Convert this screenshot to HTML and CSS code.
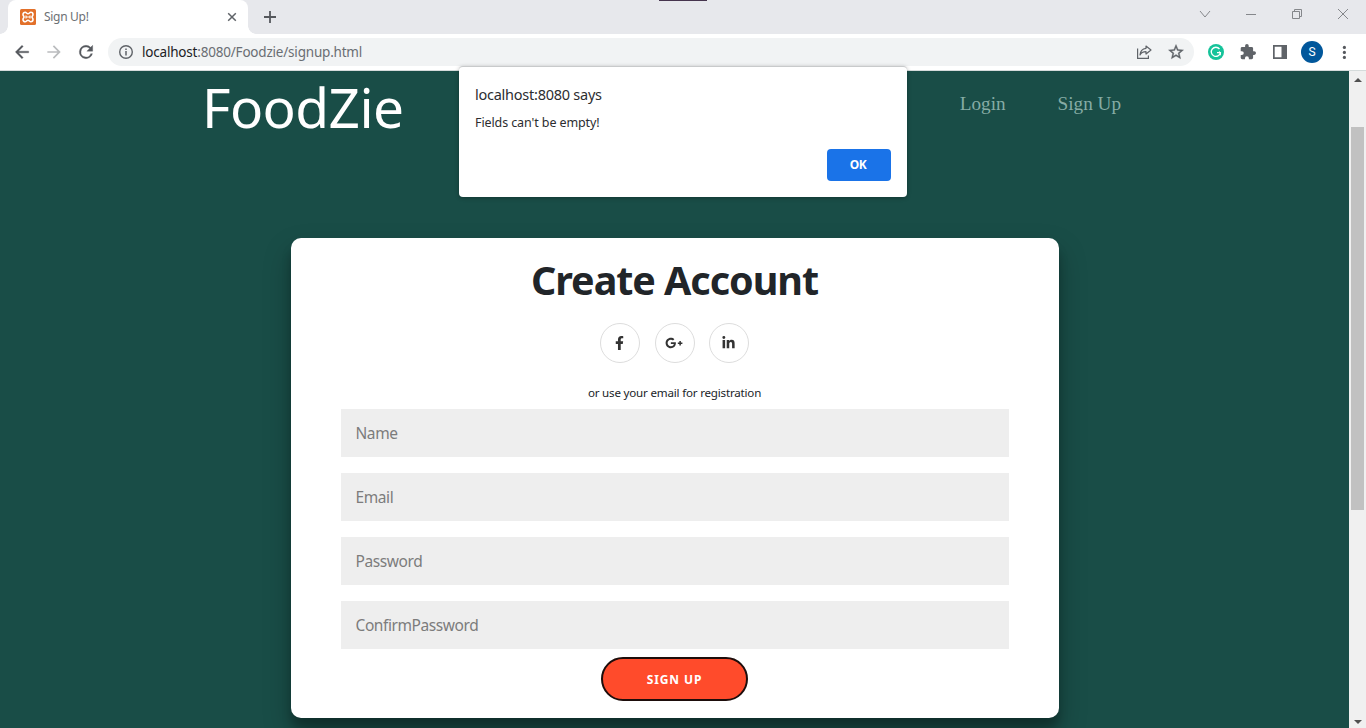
FILE: index.html
```html
<!DOCTYPE html>
<html lang="en">
<head>
<meta charset="utf-8">
<title>Sign Up!</title>
<link rel="stylesheet" href="styles.css">
</head>
<body>
<div class="window">
  <header class="tabstrip">
    <div class="tab">
      <svg class="favicon" width="16" height="16" viewBox="0 0 16 16"><rect width="16" height="16" rx="1.500" fill="#e2702a"/><path d="M5.200 3.200C6.400 3.200 6.700 4.800 8 4.800S9.600 3.200 10.800 3.200A2.200 2.200 0 0 1 13 5.400C13 6.800 12 7 12 8s1 1.200 1 2.600a2.200 2.200 0 0 1-2.200 2.200c-1.200 0-1.500-1.600-2.800-1.600s-1.600 1.600-2.800 1.600A2.200 2.200 0 0 1 3 10.600C3 9.200 4 9 4 8S3 6.800 3 5.400a2.200 2.200 0 0 1 2.200-2.200z" fill="none" stroke="#fff" stroke-width="1.600"/><path d="M6 8h4M6 6.400v3.200M10 6.400v3.200" stroke="#fff" stroke-width="1.200"/></svg>
      <span class="tab-title">Sign Up!</span>
      <svg class="tab-close" width="10" height="10" viewBox="0 0 10 10"><path d="M1.200 1.200l7.600 7.600M8.800 1.200L1.200 8.800" stroke="#5f6368" stroke-width="1.500"/></svg>
    </div>
    <svg class="new-tab" width="12" height="12" viewBox="0 0 12 12"><path d="M6 0v12M0 6h12" stroke="#55585d" stroke-width="1.800"/></svg>
    <div class="snap-bar"></div>
    <div class="window-controls">
      <svg width="12" height="12" viewBox="0 0 12 12"><path d="M1 3l5 6 5-6"/></svg>
      <svg width="12" height="12" viewBox="0 0 12 12"><path d="M1 6.500h10"/></svg>
      <svg width="12" height="12" viewBox="0 0 12 12"><path d="M1.500 3.500h7v7h-7zM3.500 3.500v-2h7v7h-2"/></svg>
      <svg width="12" height="12" viewBox="0 0 12 12"><path d="M1 1l10 10M11 1L1 11"/></svg>
    </div>
  </header>

  <div class="toolbar">
    <div class="nav-icons">
      <svg width="20" height="20" viewBox="0 0 24 24"><path fill="#55585d" stroke="#55585d" stroke-width=".4" d="M20 11H7.830l5.590-5.590L12 4l-8 8 8 8 1.410-1.410L7.830 13H20z"/></svg>
      <svg width="20" height="20" viewBox="0 0 24 24"><path fill="#babcbe" d="M4 13h12.170l-5.590 5.590L12 20l8-8-8-8-1.410 1.410L16.170 11H4z"/></svg>
      <svg width="20" height="20" viewBox="0 0 24 24"><path fill="#55585d" stroke="#55585d" stroke-width=".4" d="M17.650 6.350A7.960 7.960 0 0 0 12 4a8 8 0 1 0 7.730 10h-2.080A6 6 0 1 1 12 6c1.660 0 3.140.69 4.220 1.780L13 11h7V4z"/></svg>
    </div>
    <div class="omnibox">
      <svg class="info" width="16" height="16" viewBox="0 0 16 16"><circle cx="8" cy="8" r="6.300" fill="none" stroke="#5f6368" stroke-width="1.400"/><path d="M8 7v4.400M8 4.400v1.500" stroke="#5f6368" stroke-width="1.500"/></svg>
      <span class="url"><b>localhost</b>:8080/Foodzie/signup.html</span>
      <svg class="share" width="16" height="16" viewBox="0 0 16 16" fill="none" stroke="#5f6368" stroke-width="1.200"><path d="M1.600 4.500v9.900h10.800v-2.800"/><path d="M10 2l5 4-5 4V7.700C7 7.700 5 8.800 4 11c.3-4 2.500-6.300 6-6.700z" stroke-linejoin="round"/></svg>
      <svg class="star" width="18" height="18" viewBox="0 0 24 24"><path fill="#5f6368" stroke="#5f6368" stroke-width=".5" d="M22 9.240l-7.190-.62L12 2 9.190 8.630 2 9.240l5.460 4.730L5.820 21 12 17.270 18.180 21l-1.630-7.030zM12 15.400l-3.760 2.270 1-4.280-3.320-2.880 4.380-.38L12 6.100l1.710 4.040 4.380.38-3.320 2.880 1 4.280z"/></svg>
    </div>
    <div class="extensions">
      <svg width="16" height="16" viewBox="0 0 16 16"><circle cx="8" cy="8" r="8" fill="#15c39a"/><path d="M11.500 5A4.600 4.600 0 1 0 12.400 8.700H9" fill="none" stroke="#fff" stroke-width="1.300"/><path d="M10.900 7.300l1.500 1.400v2.600" fill="none" stroke="#fff"/></svg>
      <svg width="16" height="16" viewBox="1 1 22 22"><path fill="#5f6368" d="M20.500 11H19V7a2 2 0 0 0-2-2h-4V3.500a2.500 2.500 0 0 0-5 0V5H4a2 2 0 0 0-2 2v3.800h1.500a2.700 2.700 0 0 1 0 5.400H2V20a2 2 0 0 0 2 2h3.800v-1.500a2.700 2.700 0 0 1 5.400 0V22H17a2 2 0 0 0 2-2v-4h1.500a2.500 2.500 0 0 0 0-5z"/></svg>
      <svg width="16" height="16" viewBox="0 0 16 16"><path fill="none" stroke="#5f6368" stroke-width="1.700" d="M1.850 1.850h12.300v12.300H1.850z"/><path fill="#5f6368" d="M9.500 1H15v14H9.500z"/></svg>
      <span class="avatar">S</span>
      <svg width="16" height="16" viewBox="0 0 16 16" fill="#55585d"><circle cx="8.400" cy="3.400" r="1.600"/><circle cx="8.400" cy="8.400" r="1.600"/><circle cx="8.400" cy="13.400" r="1.600"/></svg>
    </div>
  </div>

  <div class="viewport">
    <main class="page">
      <nav class="navbar">
        <span class="brand">FoodZie</span>
        <div class="links"><span>Login</span><span>Sign Up</span></div>
      </nav>
      <form class="card">
        <h1>Create Account</h1>
        <div class="socials">
          <span class="social"><svg width="9" height="14" viewBox="0 0 320 512"><path fill="#333" d="M279.140 288l14.220-92.660h-88.910v-60.130c0-25.350 12.420-50.060 52.240-50.060h40.420V6.260S260.430 0 225.360 0c-73.220 0-121.080 44.380-121.080 124.720v70.620H22.890V288h81.390v224h100.170V288z"/></svg></span>
          <span class="social"><svg width="18" height="14" viewBox="0 0 640 512"><path fill="#333" d="M386.061 228.496c1.834 9.692 3.143 19.384 3.143 31.956C389.204 370.205 315.599 448 204.800 448c-106.084 0-192-85.915-192-192s85.916-192 192-192c51.864 0 95.083 18.859 128.611 50.292l-52.126 50.030c-14.145-13.621-39.028-29.599-76.485-29.599-65.484 0-118.920 54.221-118.920 121.277 0 67.056 53.436 121.277 118.920 121.277 75.961 0 104.513-54.745 108.965-82.773H204.800v-66.009h181.261zm185.406 6.437V179.200h-56.001v55.733h-55.733v56.001h55.733v55.733h56.001v-55.733H627.200v-56.001h-55.733z"/></svg></span>
          <span class="social"><svg width="13" height="14" viewBox="0 0 448 512"><path fill="#333" d="M100.280 448H7.400V148.900h92.880zM53.790 108.100C24.090 108.100 0 83.500 0 53.800a53.790 53.790 0 0 1 107.580 0c0 29.700-24.100 54.300-53.790 54.300zM447.900 448h-92.680V302.400c0-34.700-.7-79.200-48.290-79.200-48.290 0-55.690 37.700-55.690 76.700V448h-92.780V148.900h89.080v40.800h1.300c12.400-23.500 42.690-48.300 87.880-48.300 94 0 111.280 61.900 111.280 142.300V448z"/></svg></span>
        </div>
        <span class="hint">or use your email for registration</span>
        <div class="fields">
          <input class="f-name" type="text" placeholder="Name">
          <input class="f-email" type="text" placeholder="Email">
          <input class="f-pass" type="password" placeholder="Password">
          <input class="f-confirm" type="password" placeholder="ConfirmPassword">
        </div>
        <button class="submit" type="button">SIGN UP</button>
      </form>
    </main>
    <div class="scrollbar">
      <span class="arrow up"></span>
      <span class="thumb"></span>
      <span class="arrow down"></span>
    </div>
  </div>

  <div class="dialog">
    <div class="dialog-title">localhost:8080 says</div>
    <div class="dialog-text">Fields can't be empty!</div>
    <button class="ok" type="button">OK</button>
  </div>
</div>
</body>
</html>
```
FILE: styles.css
```css
* { box-sizing: border-box; }
body { margin: 0; overflow: hidden; font-family: "Noto Sans", "Open Sans", sans-serif; }
svg { display: block; flex: none; }
button, input { font-family: inherit; }

.window { position: relative; width: 1366px; height: 728px; display: flex; flex-direction: column; background: #fff; }

.tabstrip { height: 34px; flex: none; display: flex; background: #e7e8ec; padding-left: 8px; }
.tab { position: relative; width: 240px; display: flex; align-items: center; padding: 0 11px 0 12px; background: #fff; border-radius: 8px 8px 0 0; }
.tab::before, .tab::after { content: ""; position: absolute; bottom: 0; width: 8px; height: 8px; }
.tab::before { left: -8px; background: radial-gradient(circle at 0 0, transparent 7.500px, #fff 8px); }
.tab::after { right: -8px; background: radial-gradient(circle at 100% 0, transparent 7.500px, #fff 8px); }
.tab-title { flex: 1; margin-left: 8px; font-size: 12px; line-height: 16px; color: #6c7074; letter-spacing: -0.3px; }
.new-tab { margin: 11px 0 0 16px; }
.snap-bar { width: 48px; height: 1px; margin-left: 383px; background: #46344e; }
.window-controls { flex: 1; display: flex; justify-content: flex-end; gap: 34px; padding: 8px 17px 0 0; }
.window-controls svg { fill: none; stroke: #85878b; stroke-width: 1; }

.toolbar { height: 37px; flex: none; display: flex; align-items: center; padding: 0 0 1px 12px; border-bottom: 1px solid #d5dbdb; }
.nav-icons { display: flex; gap: 12px; width: 96px; }
.omnibox { width: 1086px; height: 28px; display: flex; align-items: center; padding: 0 9px 0 10px; border-radius: 14px; background: #f1f3f4; }
.url { flex: 1; margin-left: 8px; font-size: 13.500px; line-height: 20px; color: #6a6e73; letter-spacing: -0.2px; }
.url b { font-weight: 400; color: #202124; }
.star { margin-left: 15px; }
.extensions { display: flex; align-items: center; margin-left: 14px; }
.extensions svg + svg { margin-left: 16px; }
.avatar { width: 22px; height: 22px; margin: 0 13px; border-radius: 50%; background: #01579b; color: #fff; font: 12px/22px Roboto, sans-serif; text-align: center; }
.extensions .avatar + svg { margin-left: 0; }

.viewport { flex: 1; display: flex; min-height: 0; background: #194d47; }
.page { flex: 1; }
.navbar { height: 167px; display: flex; justify-content: space-between; padding: 0 228px 0 202px; }
.brand { font-size: 55px; line-height: 72px; color: #fff; letter-spacing: -0.6px; }
.links { display: flex; gap: 52px; padding-top: 22px; font: 19.200px/22px "Liberation Serif", serif; color: #86aca5; }

.card { width: 768px; height: 480px; margin-left: 291px; padding: 18px 51px 0 50px; display: flex; flex-direction: column; align-items: center; border-radius: 10px; background: #fff; box-shadow: 0 14px 28px rgba(0,0,0,.25), 0 10px 10px rgba(0,0,0,.22); }
h1 { margin: 0; font-size: 39.500px; line-height: 48px; font-weight: 700; color: #212529; white-space: nowrap; letter-spacing: -1.050px; }
.socials { display: flex; gap: 14.500px; margin-top: 19px; }
.social { width: 40px; height: 40px; display: flex; align-items: center; justify-content: center; padding-right: 1px; border: 1px solid #ddd; border-radius: 50%; }
.hint { margin-top: 21px; font-size: 11.600px; line-height: 18px; color: #212529; letter-spacing: -0.2px; }
.fields { width: 668px; align-self: flex-start; display: flex; flex-direction: column; gap: 16px; margin-top: 7px; }
.fields input { height: 48px; padding: 0 14.500px; border: 0; background: #eee; font-size: 15.500px; letter-spacing: -0.42px; }
.fields input::placeholder { color: #7c7c7c; opacity: 1; }
.submit { width: 147px; height: 44px; margin-top: 8px; padding: 0; border: 2px solid #1d0d0b; border-radius: 22px; background: #ff4b2b; color: #fff; font-size: 12px; font-weight: 700; letter-spacing: 0.9px; }

.scrollbar { width: 17px; flex: none; display: flex; flex-direction: column; align-items: center; padding: 7px 0 4px; background: #f0f0f0; }
.arrow { border: 4px solid transparent; border-top-width: 0; border-bottom-width: 0; }
.up { border-bottom: 4px solid #505050; }
.down { margin-top: auto; border-top: 4px solid #505050; }
.thumb { width: 13px; height: 383px; margin-top: 45px; background: #c1c1c1; }

.dialog { position: absolute; left: 459px; top: 66px; width: 448px; height: 131px; display: flex; flex-direction: column; padding: 17px 16px 0; border-top: 1px solid #c8cacb; border-radius: 4px; background: #fff; box-shadow: 0 1px 4px rgba(0,0,0,.3); }
.dialog-title { font-size: 14.500px; line-height: 20px; color: #2c2d30; letter-spacing: -0.25px; }
.dialog-text { margin-top: 9px; font-size: 12.500px; line-height: 20px; color: #2c2d30; letter-spacing: -0.1px; }
.ok { width: 64px; height: 32px; margin-top: 16px; align-self: flex-end; padding: 0 2px 1px 0; border: 0; border-radius: 4px; background: #1a73e8; color: #fff; font-size: 12px; font-weight: 700; letter-spacing: -0.5px; }
```
